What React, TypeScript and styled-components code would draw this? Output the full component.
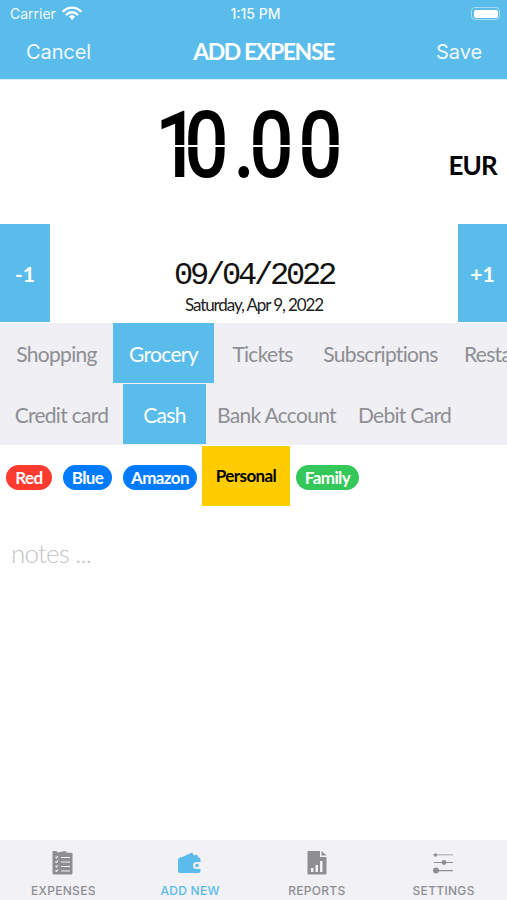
import styled, { createGlobalStyle } from "styled-components"

const BLUE = "#5abcea"
const GRAY = "#8e8e93"
const FILL = "#efeff4"

const CATEGORIES = [
	{ label: "Shopping", width: 113 },
	{ label: "Grocery", width: 101, active: true },
	{ label: "Tickets", width: 97 },
	{ label: "Subscriptions", width: 139 },
	{ label: "Restaurants", width: 110 },
]

const PAYMENTS = [
	{ label: "Credit card", width: 123 },
	{ label: "Cash", width: 83, active: true },
	{ label: "Bank Account", width: 141 },
	{ label: "Debit Card", width: 115 },
]

const TAGS = [
	{ label: "Red", color: "#ff3b30", width: 46, gap: 11 },
	{ label: "Blue", color: "#007aff", width: 49, gap: 11 },
	{ label: "Amazon", color: "#007aff", width: 74, gap: 5 },
	{ label: "Personal", color: "#ffcc00", width: 88, gap: 6, selected: true },
	{ label: "Family", color: "#34c759", width: 63, gap: 0 },
]

const GlobalStyle = createGlobalStyle`
	html, body {
		margin: 0;
		padding: 0;
		background: #fff;
	}
	* {
		box-sizing: border-box;
	}
`

const Screen = styled.div`
	width: 507px;
	height: 900px;
	display: flex;
	flex-direction: column;
	overflow: hidden;
	background: #fff;
	font-family: "Lato", "Liberation Sans", sans-serif;
`

const Header = styled.header`
	height: 80px;
	flex-shrink: 0;
	background: ${BLUE};
	color: #fff;
	border-bottom: 1px solid #d9f0fb;
`

const StatusBar = styled.div`
	height: 27px;
	padding: 0 6px 0 10px;
	display: grid;
	grid-template-columns: 1fr auto 1fr;
	align-items: center;
	font-family: "Inter", "Liberation Sans", sans-serif;
	font-size: 14px;
	color: #f2fafe;
`

const StatusLeft = styled.div`
	display: flex;
	align-items: center;
	gap: 6px;
`

const StatusTime = styled.div`
	font-weight: 500;
`

const Battery = styled.div`
	justify-self: end;
	width: 29px;
	height: 13px;
	border: 1px solid rgba(255, 255, 255, 0.45);
	border-radius: 4px;
	padding: 1.5px;
	margin-right: 1px;

	&::before {
		content: "";
		display: block;
		height: 100%;
		background: #fff;
		border-radius: 2px;
	}
`

const NavBar = styled.div`
	height: 52px;
	padding: 0 25px 2px 26px;
	display: flex;
	align-items: center;
	justify-content: space-between;
`

const NavAction = styled.span`
	font-family: "Inter", "Liberation Sans", sans-serif;
	font-size: 20px;
	letter-spacing: -0.1px;
	color: #f0f9fe;
`

const NavTitle = styled.span`
	margin-bottom: 3px;
	font-size: 23px;
	font-weight: 700;
	letter-spacing: -1.4px;
`

const AmountArea = styled.div`
	height: 144px;
	flex-shrink: 0;
	display: grid;
	grid-template-columns: 1fr auto 1fr;
`

const Amount = styled.div`
	grid-column: 2;
	margin: 21px 4px 0 0;
	display: flex;
	align-items: center;
	height: 90px;
	font-family: "Roboto", sans-serif;
	font-size: 92px;
	font-weight: 500;
	line-height: 90px;
	color: #000;
	transform: scaleX(0.85);
`

const Digit = styled.span<{ $spacing: number }>`
	position: relative;
	display: block;
	letter-spacing: ${(p) => p.$spacing}px;

	/* the lcd segment break across the middle */
	&::after {
		content: "";
		position: absolute;
		left: 0;
		right: 0;
		top: 49%;
		height: 2px;
		background: #fff;
	}
`

const Currency = styled.div`
	grid-column: 3;
	justify-self: end;
	margin: 69px 10px 0 0;
	font-size: 26px;
	font-weight: 700;
	letter-spacing: -0.8px;
	color: #000;
`

const DateRow = styled.div`
	height: 99px;
	flex-shrink: 0;
	display: flex;
	align-items: stretch;
`

const StepButton = styled.div<{ $width: number }>`
	width: ${(p) => p.$width}px;
	height: 98px;
	background: ${BLUE};
	color: #fff;
	font-size: 21px;
	font-weight: 700;
	display: flex;
	align-items: center;
	justify-content: center;
`

const DateBlock = styled.div`
	flex: 1;
	display: flex;
	flex-direction: column;
	align-items: center;
	padding-top: 33px;
`

const DateValue = styled.div`
	font-family: "Liberation Mono", monospace;
	font-size: 32px;
	line-height: 37px;
	letter-spacing: -3.2px;
	color: #111;
`

const DateLong = styled.div`
	font-size: 17px;
	line-height: 22px;
	letter-spacing: -1.1px;
	color: #222;
`

const ChipRow = styled.div`
	height: 61px;
	flex-shrink: 0;
	background: ${FILL};
	display: flex;
	overflow: hidden;
`

const Chip = styled.div<{ $width: number; $active?: boolean }>`
	flex: 0 0 ${(p) => p.$width}px;
	height: 60px;
	display: flex;
	align-items: center;
	justify-content: center;
	white-space: nowrap;
	overflow: hidden;
	font-size: 21px;
	letter-spacing: -0.7px;
	background: ${(p) => (p.$active ? BLUE : "transparent")};
	color: ${(p) => (p.$active ? "#fff" : GRAY)};
`

const LastChip = styled(Chip)`
	justify-content: flex-start;
	padding-left: 14px;
`

const TagRow = styled.div`
	height: 61px;
	flex-shrink: 0;
	padding-left: 6px;
	display: flex;
	align-items: center;
`

const TagItem = styled.div<{ $color: string; $width: number; $gap: number; $selected?: boolean }>`
	flex: 0 0 ${(p) => p.$width}px;
	margin-right: ${(p) => p.$gap}px;
	height: ${(p) => (p.$selected ? "60px" : "25px")};
	margin-top: ${(p) => (p.$selected ? "0" : "3px")};
	border-radius: ${(p) => (p.$selected ? "0" : "13px")};
	background: ${(p) => p.$color};
	color: ${(p) => (p.$selected ? "#000" : "#fff")};
	font-size: 17px;
	font-weight: 700;
	letter-spacing: -0.6px;
	display: flex;
	align-items: center;
	justify-content: center;
`

const Notes = styled.div`
	flex: 1;
	padding: 31px 11px 0;
	font-size: 26px;
	font-weight: 300;
	line-height: 32px;
	letter-spacing: -0.8px;
	color: #c4c4c8;
`

const TabBar = styled.nav`
	height: 60px;
	flex-shrink: 0;
	background: #f1f1f6;
	display: grid;
	grid-template-columns: repeat(4, 1fr);
`

const Tab = styled.div<{ $active?: boolean }>`
	display: flex;
	flex-direction: column;
	align-items: center;
	padding-top: 10px;
	color: ${(p) => (p.$active ? BLUE : GRAY)};
	font-family: "Inter", "Liberation Sans", sans-serif;
	font-size: 12px;
	font-weight: 500;
	letter-spacing: 0.3px;

	svg {
		display: block;
		margin-bottom: 8px;
	}
`

const WifiIcon = () => (
	<svg width="20" height="15" viewBox="0 0 20 15" fill="none" stroke="#fff" strokeLinecap="round">
		<path d="M1.5 5.2a12 12 0 0 1 17 0" strokeWidth="2.4" />
		<path d="M4.8 8.4a7.4 7.4 0 0 1 10.4 0" strokeWidth="2.4" />
		<path d="M10 13.6l-2.6-3a3.6 3.6 0 0 1 5.2 0z" fill="#fff" strokeWidth="0.6" />
	</svg>
)

const ExpensesIcon = () => (
	<svg width="22" height="25" viewBox="0 0 22 25">
		<path
			fill="currentColor"
			d="M1.5 1h3l1 1.5 8-1.5 1 1.5 6 0.5v20a1.5 1.5 0 0 1-1.5 1.5H2a1.500 1.500 0 0 1-1.500-1.500V2a1 1 0 0 1 1-1z"
		/>
		<path
			stroke="#f1f1f6"
			strokeWidth="1.1"
			fill="none"
			d="M3.500 7l1 1 1.500-2M9 7.500h9M3.500 11.500l1 1 1.500-2M9 12h9M3.500 16l1 1 1.500-2M9 16.500h9M3.500 20.500l1 1 1.500-2M9 21h9"
		/>
	</svg>
)

const WalletIcon = () => (
	<svg width="25" height="25" viewBox="0 0 25 25">
		<path fill="currentColor" d="M2 8L14 2.500l2 3 3-1 1.500 3.500z" />
		<path fill="currentColor" d="M2.500 7.500h18a2 2 0 0 1 2 2V21a2 2 0 0 1-2 2h-18A2.500 2.500 0 0 1 0 20.500V10a2.500 2.500 0 0 1 2.500-2.500z" />
		<rect x="15" y="12" width="10" height="7" rx="3.500" fill="#f1f1f6" />
		<circle cx="19" cy="15.500" r="1.800" fill="currentColor" />
	</svg>
)

const ReportsIcon = () => (
	<svg width="20" height="25" viewBox="0 0 20 25">
		<path fill="currentColor" d="M1.500 1H13v6h6.500v16.500a1 1 0 0 1-1 1H1.500a1 1 0 0 1-1-1V2a1 1 0 0 1 1-1z" />
		<path fill="currentColor" d="M14.500 1l5 4.500h-5z" />
		<path fill="#f1f1f6" d="M4 18h2.500v4H4zM8.500 15H11v7H8.500zM13 11h2.500v11H13z" />
	</svg>
)

const SettingsIcon = () => (
	<svg width="21" height="25" viewBox="0 0 21 25" fill="currentColor">
		<path d="M0 4.500h20v0.800H0zM1 12h19v1H1zM1 20h19v1.200H1z" />
		<circle cx="2.500" cy="5" r="1.700" />
		<circle cx="11" cy="12.500" r="2.400" />
		<circle cx="3" cy="20.500" r="3" />
	</svg>
)

export default function App() {
	return (
		<Screen>
			<GlobalStyle />
			<Header>
				<StatusBar>
					<StatusLeft>
						Carrier
						<WifiIcon />
					</StatusLeft>
					<StatusTime>1:15 PM</StatusTime>
					<Battery />
				</StatusBar>
				<NavBar>
					<NavAction>Cancel</NavAction>
					<NavTitle>ADD EXPENSE</NavTitle>
					<NavAction>Save</NavAction>
				</NavBar>
			</Header>

			<AmountArea>
				<Amount>
					<Digit $spacing={-18}>1</Digit>
					<Digit $spacing={5.6}>0</Digit>
					<Digit $spacing={-7}>.</Digit>
					<Digit $spacing={5.6}>0</Digit>
					<Digit $spacing={5.6}>0</Digit>
				</Amount>
				<Currency>EUR</Currency>
			</AmountArea>

			<DateRow>
				<StepButton $width={50}>-1</StepButton>
				<DateBlock>
					<DateValue>09/04/2022</DateValue>
					<DateLong>Saturday, Apr 9, 2022</DateLong>
				</DateBlock>
				<StepButton $width={49}>+1</StepButton>
			</DateRow>

			<ChipRow>
				{CATEGORIES.slice(0, 4).map((c) => (
					<Chip key={c.label} $width={c.width} $active={c.active}>
						{c.label}
					</Chip>
				))}
				<LastChip $width={CATEGORIES[4].width}>{CATEGORIES[4].label}</LastChip>
			</ChipRow>

			<ChipRow>
				{PAYMENTS.map((c) => (
					<Chip key={c.label} $width={c.width} $active={c.active}>
						{c.label}
					</Chip>
				))}
			</ChipRow>

			<TagRow>
				{TAGS.map((t) => (
					<TagItem key={t.label} $color={t.color} $width={t.width} $gap={t.gap} $selected={t.selected}>
						{t.label}
					</TagItem>
				))}
			</TagRow>

			<Notes>notes ...</Notes>

			<TabBar>
				<Tab>
					<ExpensesIcon />
					EXPENSES
				</Tab>
				<Tab $active>
					<WalletIcon />
					ADD NEW
				</Tab>
				<Tab>
					<ReportsIcon />
					REPORTS
				</Tab>
				<Tab>
					<SettingsIcon />
					SETTINGS
				</Tab>
			</TabBar>
		</Screen>
	)
}
